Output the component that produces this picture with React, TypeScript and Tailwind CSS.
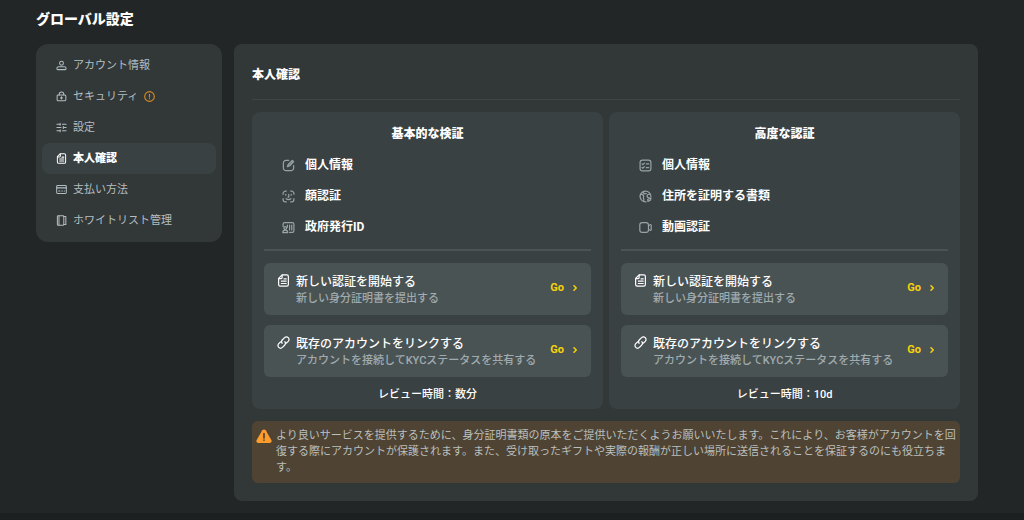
import React, { useState } from 'react';

type IconProps = { className?: string };

const Svg: React.FC<{ className?: string; children: React.ReactNode }> = ({ className = '', children }) => (
  <svg viewBox="0 0 24 24" fill="none" stroke="currentColor" strokeWidth="2.2" strokeLinecap="round" strokeLinejoin="round" className={`shrink-0 ${className}`} aria-hidden="true">
    {children}
  </svg>
);

const UserIcon = ({ className }: IconProps) => (
  <Svg className={className}>
    <circle cx="12" cy="7" r="4.2" />
    <path d="M6 14.5h12a4 4 0 0 1 4 4V19a2 2 0 0 1-2 2H4a2 2 0 0 1-2-2v-.5a4 4 0 0 1 4-4z" />
  </Svg>
);

const LockIcon = ({ className }: IconProps) => (
  <Svg className={className}>
    <rect x="2.5" y="8.5" width="19" height="13" rx="2.5" />
    <path d="M7 8.500V7a5 5 0 0 1 10 0v1.500" />
    <path d="M12 12.500v5M10 15h4" />
  </Svg>
);

const SlidersIcon = ({ className }: IconProps) => (
  <Svg className={className}>
    <path d="M2 5h7M14 5h8M2 12h9M16 12h6M2 19h7M14 19h8" />
    <path d="M9 3v4M16 10v4M9 17v4" />
  </Svg>
);

const DocIcon = ({ className }: IconProps) => (
  <Svg className={className}>
    <path d="M9.500 1.500H18a3 3 0 0 1 3 3v15a3 3 0 0 1-3 3H6a3 3 0 0 1-3-3V8z" />
    <path d="M9.500 2v4.500a2 2 0 0 1-2 2H3.500" />
    <path d="M13 9h4M8 13h9M8 17.500h9" />
  </Svg>
);

const CardIcon = ({ className }: IconProps) => (
  <Svg className={className}>
    <rect x="1.500" y="3.500" width="21" height="17" rx="2" />
    <path d="M2 8.500h20" strokeWidth="3" />
    <path d="M6 15.500h2.500M12.500 15.500h1.500M18 15.500h.5" />
  </Svg>
);

const BookIcon = ({ className }: IconProps) => (
  <Svg className={className}>
    <rect x="3" y="1.500" width="14" height="21" rx="2" />
    <path d="M6.500 2v20" />
    <path d="M17 3.500h4.500v17H17" />
  </Svg>
);

const EditIcon = ({ className }: IconProps) => (
  <Svg className={className}>
    <path d="M12.500 2.500H7.500a5 5 0 0 0-5 5v9a5 5 0 0 0 5 5h9a5 5 0 0 0 5-5V12" />
    <path d="M19 2.500l2.500 2.500-7 7.500-4.500 1.500 1.500-4z" fill="currentColor" fillOpacity="0.6" />
  </Svg>
);

const FaceIcon = ({ className }: IconProps) => (
  <Svg className={className}>
    <path d="M2 8V6.500A4.500 4.500 0 0 1 6.500 2H8M16 2h1.500A4.500 4.500 0 0 1 22 6.500V8M22 16v1.500a4.500 4.500 0 0 1-4.500 4.500H16M8 22H6.500A4.500 4.500 0 0 1 2 17.500V16" />
    <path d="M7 8v1.500M17 8v1.500M12.500 8v5H11M7.500 16c2.500 2 6.500 2 9 0" />
  </Svg>
);

const IdIcon = ({ className }: IconProps) => (
  <Svg className={className}>
    <path d="M2 10V6a3 3 0 0 1 3-3h14a3 3 0 0 1 3 3v12a3 3 0 0 1-3 3h-5" />
    <circle cx="6" cy="13" r="2.500" />
    <path d="M1.500 21.500c0-3 2-4.500 4.500-4.500s4.500 1.500 4.500 4.500z" />
    <path d="M10 7.500v4M14 7.500v9M18 7.500v9" />
  </Svg>
);

const ChecklistIcon = ({ className }: IconProps) => (
  <Svg className={className}>
    <rect x="2" y="2" width="20" height="20" rx="4.500" />
    <path d="M5.500 9l1.500 1.500L10 7.500M5.500 15.500L7 17l3-3M13.500 9H18M13.500 16H18" />
  </Svg>
);

const GlobeIcon = ({ className }: IconProps) => (
  <Svg className={className}>
    <path d="M13 22A10 10 0 1 1 22 12" />
    <path d="M3 7.500c4 0 5.500 1.500 5.500 4s-1 2.500 0 4.500.5 3.500 0 5M7 4c1.500 2.500 4 3.500 6.500 2.500M21 8c-3.500-1-6 .5-6 3s2 3.500 4 3.500" />
    <path d="M16.500 21l-.5-3.500 6-3-.5 4z" />
  </Svg>
);

const VideoIcon = ({ className }: IconProps) => (
  <Svg className={className}>
    <rect x="1.500" y="3" width="16" height="18" rx="4.500" />
    <path d="M17.500 9l3-2c1-.5 2 0 2 1v8c0 1-1 1.500-2 1l-3-2" />
  </Svg>
);

const LinkIcon = ({ className }: IconProps) => (
  <Svg className={className}>
    <path d="M9.500 13.500c-1.500-2-1.500-4.500.5-6.500l4-4a4.600 4.600 0 0 1 6.800 6.800L17.500 13" />
    <path d="M14.500 10.500c1.500 2 1.500 4.500-.5 6.500l-4 4a4.600 4.600 0 0 1-6.800-6.800L6.500 11" />
  </Svg>
);

const ChevronIcon = ({ className }: IconProps) => (
  <Svg className={className}>
    <path d="M8 3l9 9-9 9" strokeWidth="6" />
  </Svg>
);

const AlertCircleIcon = ({ className }: IconProps) => (
  <Svg className={className}>
    <circle cx="12" cy="12" r="10.500" strokeWidth="2.500" />
    <path d="M12 7v6M12 16.500v.5" strokeWidth="2.500" />
  </Svg>
);

const WarningIcon = ({ className }: IconProps) => (
  <svg viewBox="0 0 24 24" className={`shrink-0 ${className}`} aria-hidden="true">
    <path d="M9.500 3.500a3 3 0 0 1 5 0l8.500 14.500a3 3 0 0 1-2.500 4.500h-17A3 3 0 0 1 1 18z" fill="#ff9c2e" />
    <path d="M12 8.500v6.500M12 18v.5" stroke="#4f4232" strokeWidth="2.500" strokeLinecap="round" />
  </svg>
);

const menu = [
  { id: 'account', label: 'アカウント情報', icon: UserIcon },
  { id: 'security', label: 'セキュリティ', icon: LockIcon, alert: true },
  { id: 'preferences', label: '設定', icon: SlidersIcon },
  { id: 'verify', label: '本人確認', icon: DocIcon },
  { id: 'payment', label: '支払い方法', icon: CardIcon },
  { id: 'whitelist', label: 'ホワイトリスト管理', icon: BookIcon },
];

const levels = [
  {
    title: '基本的な検証',
    reviewTime: '数分',
    items: [
      { label: '個人情報', icon: EditIcon },
      { label: '顔認証', icon: FaceIcon },
      { label: '政府発行ID', icon: IdIcon },
    ],
  },
  {
    title: '高度な認証',
    reviewTime: '10d',
    items: [
      { label: '個人情報', icon: ChecklistIcon },
      { label: '住所を証明する書類', icon: GlobeIcon },
      { label: '動画認証', icon: VideoIcon },
    ],
  },
];

const actions = [
  { title: '新しい認証を開始する', text: '新しい身分証明書を提出する', icon: DocIcon },
  { title: '既存のアカウントをリンクする', text: 'アカウントを接続してKYCステータスを共有する', icon: LinkIcon },
];

const App: React.FC = () => {
  const [active, setActive] = useState('verify');

  return (
    <div className="flex min-h-screen flex-col bg-[#232626] font-[Roboto,'Noto_Sans_CJK_JP',sans-serif] text-white">
      <div className="pt-[9px] pr-[46px] pb-3 pl-9">
        <h1 className="mb-[15px] text-sm font-black">グローバル設定</h1>

        <div className="flex items-start gap-3">
          <nav className="w-[186px] shrink-0 rounded-xl bg-[#323738] p-1.5">
            {menu.map(({ id, label, icon: Icon, alert }) => (
              <a
                key={id}
                href={`#${id}`}
                onClick={() => setActive(id)}
                className={`flex items-center gap-1.5 rounded-lg pl-3.5 text-[11px] leading-[31px] ${
                  active === id ? 'bg-[#3a4142] font-black text-white' : 'text-[#b3bec1]'
                }`}
              >
                <Icon className="size-[11px]" />
                {label}
                {alert && <AlertCircleIcon className="size-[11px] text-[#d38a1f]" />}
              </a>
            ))}
          </nav>

          <main className="min-w-0 flex-1 rounded-lg bg-[#323738] px-[18px] pb-[18px]">
            <h2 className="mb-3 border-b border-[#3e4546] pt-[22px] pb-[15px] text-xs leading-[18px] font-black">本人確認</h2>

            <div className="grid grid-cols-2 gap-1.5">
              {levels.map((level) => (
                <section key={level.title} className="rounded-lg bg-[#3a4142] px-3 pt-[7px] pb-1.5">
                  <h3 className="text-center text-xs leading-[31px] font-black">{level.title}</h3>
                  <ul className="border-b-2 border-[#4b5354] pb-1.5 pl-[18px]">
                    {level.items.map(({ label, icon: Icon }) => (
                      <li key={label} className="flex items-center gap-2.5 text-xs leading-[31px] font-bold">
                        <Icon className="size-[13px] text-[#98a4a6]" />
                        {label}
                      </li>
                    ))}
                  </ul>

                  <div className="mt-3 flex flex-col gap-2.5">
                    {actions.map(({ title, text, icon: Icon }) => (
                      <button key={title} type="button" className="flex items-center rounded-md bg-[#4a5354] px-[13px] pt-[11px] pb-2 text-left">
                        <Icon className="mr-1.5 size-[13px] self-start" />
                        <span className="min-w-0 flex-1">
                          <span className="block text-xs leading-4 font-medium">{title}</span>
                          <span className="block text-[11px] leading-[17px] font-medium text-[#a0abaf]">{text}</span>
                        </span>
                        <span className="flex items-center gap-2 pb-1.5 text-[11px] leading-[15px] font-bold text-[#f6d20a]">
                          Go
                          <ChevronIcon className="size-1.5" />
                        </span>
                      </button>
                    ))}
                  </div>
                  <p className="mt-2.5 text-center text-[11px] leading-4 font-medium">レビュー時間：{level.reviewTime}</p>
                </section>
              ))}
            </div>

            <div className="mt-3 flex items-start gap-1 rounded-md bg-[#4f4434] py-[7px] pr-0.5 pl-1 text-[11px] leading-4 text-[#b9bfbe]">
              <WarningIcon className="size-4" />
              <p>
                より良いサービスを提供するために、身分証明書類の原本をご提供いただくようお願いいたします。これにより、お客様がアカウントを回復する際にアカウントが保護されます。また、受け取ったギフトや実際の報酬が正しい場所に送信されることを保証するのにも役立ちます。
              </p>
            </div>
          </main>
        </div>
      </div>
      <footer className="flex-1 bg-[#1d2020]" />
    </div>
  );
};

export default App;
